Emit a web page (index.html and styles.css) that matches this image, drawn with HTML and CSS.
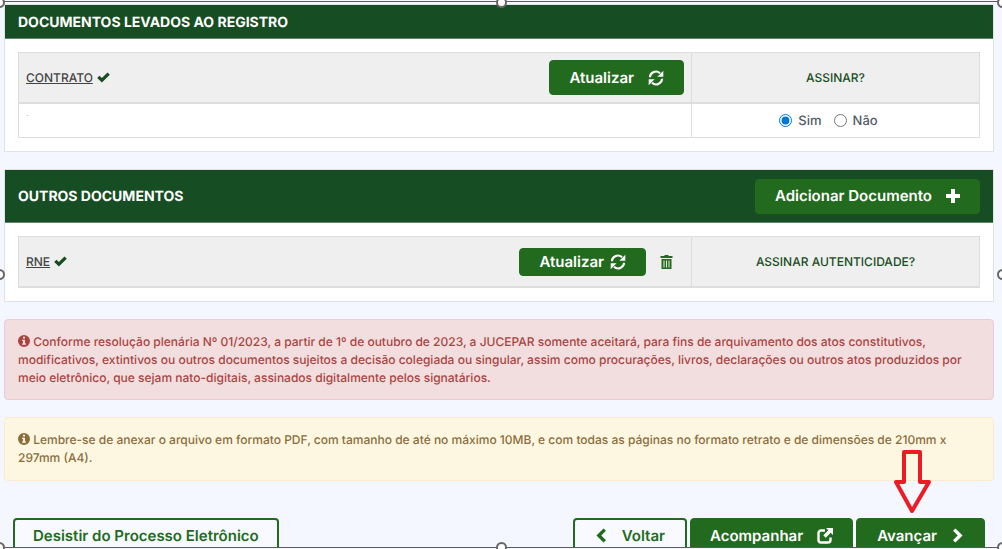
FILE: index.html
```html
<!DOCTYPE html>
<html lang="pt-BR">
<head>
<meta charset="utf-8">
<title>Documentos</title>
<link rel="stylesheet" href="styles.css">
</head>
<body>
<svg class="sprite" aria-hidden="true">
  <symbol id="check" viewBox="0 0 13 11"><path d="M.2 6.1 2.5 3.800l2.400 2.300L10.500.4l2.300 2.300-7.900 7.900z"/></symbol>
  <symbol id="refresh" viewBox="0 0 16 16"><path d="M1.900 7.200A6 6 0 0 1 12 3.200M14.100 8.800A6 6 0 0 1 4 12.800" fill="none" stroke="currentColor" stroke-width="2.100"/><path d="M15.300.8v5.900H9.400zM.7 15.200V9.300h5.900z"/></symbol>
  <symbol id="plus" viewBox="0 0 14 14"><path d="M5 0h4v5h5v4H9v5H5V9H0V5h5z"/></symbol>
  <symbol id="trash" viewBox="0 0 12 14"><path fill-rule="evenodd" d="M4 0h4v1h4v2H0V1h4zM1 4h10v10H1zm2 1.500v7h1v-7zm2.500 0v7h1v-7zm2.500 0v7h1v-7z"/></symbol>
  <symbol id="info" viewBox="0 0 12 12"><path fill-rule="evenodd" d="M6 0a6 6 0 1 1 0 12A6 6 0 0 1 6 0zM5 1.800v1.700h2V1.800zM4 4.700v1.200h1v2.600H4v1.300h4V8.500H7V4.700z"/></symbol>
  <symbol id="left" viewBox="0 0 10 14"><path d="M8.500 1.500 3 7l5.500 5.500" fill="none" stroke="currentColor" stroke-width="3.200"/></symbol>
  <symbol id="right" viewBox="0 0 10 14"><path d="M1.500 1.500 7 7l-5.500 5.500" fill="none" stroke="currentColor" stroke-width="3.200"/></symbol>
  <symbol id="share" viewBox="0 0 16 16"><path d="M8 2.500H4A2.500 2.500 0 0 0 1.500 5v7A2.500 2.500 0 0 0 4 14.500h7a2.500 2.500 0 0 0 2.500-2.500V9.500" fill="none" stroke="currentColor" stroke-width="2.400"/><path d="M9 0h7v7l-2.300-2.300-5 5-2.400-2.400 5-5z"/></symbol>
</svg>

<main class="page">
  <section class="card">
    <header class="card-header"><h2>DOCUMENTOS LEVADOS AO REGISTRO</h2></header>
    <div class="card-body">
      <table class="docs">
        <colgroup><col class="col-doc"><col></colgroup>
        <thead>
          <tr>
            <th scope="col"><div class="doc-row">
              <span class="doc-name"><a href="#">CONTRATO</a><svg class="icon-check"><use href="#check"/></svg></span>
              <button type="button" class="btn">Atualizar<svg class="icon"><use href="#refresh"/></svg></button>
            </div></th>
            <th scope="col" class="sign">ASSINAR?</th>
          </tr>
        </thead>
        <tbody>
          <tr>
            <td class="mark">.</td>
            <td><div class="choices">
              <label><input type="radio" name="assinar" checked>Sim</label>
              <label><input type="radio" name="assinar">Não</label>
            </div></td>
          </tr>
        </tbody>
      </table>
    </div>
  </section>

  <section class="card">
    <header class="card-header with-action">
      <h2>OUTROS DOCUMENTOS</h2>
      <button type="button" class="btn">Adicionar Documento<svg class="icon-plus"><use href="#plus"/></svg></button>
    </header>
    <div class="card-body">
      <table class="docs head-only">
        <colgroup><col class="col-doc"><col></colgroup>
        <thead>
          <tr>
            <th scope="col"><div class="doc-row">
              <span class="doc-name"><a href="#">RNE</a><svg class="icon-check"><use href="#check"/></svg></span>
              <span class="actions">
                <button type="button" class="btn btn-small">Atualizar<svg class="icon"><use href="#refresh"/></svg></button>
                <button type="button" class="btn-trash" aria-label="Excluir"><svg><use href="#trash"/></svg></button>
              </span>
            </div></th>
            <th scope="col" class="sign">ASSINAR AUTENTICIDADE?</th>
          </tr>
        </thead>
      </table>
    </div>
  </section>

  <p class="alert danger"><svg class="icon-info"><use href="#info"/></svg> Conforme resolução plenária Nº 01/2023, a partir de 1º de outubro de 2023, a JUCEPAR somente aceitará, para fins de arquivamento dos atos constitutivos, modificativos, extintivos ou outros documentos sujeitos a decisão colegiada ou singular, assim como procurações, livros, declarações ou outros atos produzidos por meio eletrônico, que sejam nato-digitais, assinados digitalmente pelos signatários.</p>
  <p class="alert warning"><svg class="icon-info"><use href="#info"/></svg> Lembre-se de anexar o arquivo em formato PDF, com tamanho de até no máximo 10MB, e com todas as páginas no formato retrato e de dimensões de 210mm x 297mm (A4).</p>

  <footer class="footer">
    <button type="button" class="btn outline">Desistir do Processo Eletrônico</button>
    <div class="nav">
      <button type="button" class="btn outline step"><svg class="icon-chevron"><use href="#left"/></svg>Voltar</button>
      <button type="button" class="btn">Acompanhar<svg class="icon"><use href="#share"/></svg></button>
      <div class="next">
        <button type="button" class="btn step">Avançar<svg class="icon-chevron"><use href="#right"/></svg></button>
        <svg class="arrow" viewBox="0 0 38 66"><path d="M11 3h16v30h9L19 62 3 33h8z" fill="none" stroke="#ed1c24" stroke-width="4" stroke-linejoin="round"/></svg>
      </div>
    </div>
  </footer>
</main>

<div class="frame" aria-hidden="true">
  <i class="top start"></i><i class="top mid"></i><i class="top end"></i>
  <i class="center start"></i><i class="center end"></i>
  <i class="bottom start"></i><i class="bottom mid"></i><i class="bottom end"></i>
</div>
</body>
</html>
```

FILE: styles.css
```css
* { box-sizing: border-box; }
body {
  margin: 0;
  height: 100vh;
  overflow: hidden;
  background: #f4f7ff;
  color: #545b66;
  font: 500 12px/18px Inter, "Liberation Sans", sans-serif;
  text-rendering: geometricPrecision;
}
h2, p { margin: 0; }
svg { fill: currentColor; flex: none; }
.sprite { display: none; }
.page {
  display: flex;
  flex-direction: column;
  gap: 17px;
  padding: 4px 8px 0 4px;
}

.card {
  background: #fff;
  border: 1px solid #dfe3e6;
}
.card-header {
  display: flex;
  align-items: center;
  justify-content: space-between;
  min-height: 34px;
  padding: 0 13px;
  background: #174d22;
  border-bottom: 1px solid #5f8568;
  color: #fff;
}
.card-header h2 { padding-top: 2px; font-size: 14px; line-height: 20px; font-weight: 700; }
.with-action { min-height: 53px; }
.card-body { padding: 13px; }

.docs {
  width: 100%;
  table-layout: fixed;
  border: 1px solid #ddd;
  border-collapse: separate;
  border-spacing: 0;
}
.col-doc { width: 70%; }
.docs th, .docs td { padding: 0 7px; text-align: left; font-weight: 500; }
.docs th { height: 51px; background: #efefef; border-bottom: 2px solid #ddd; }
.docs td { height: 33px; }
.docs th + th, .docs td + td { border-left: 1px solid #ddd; }
.docs .sign { text-align: center; color: #174d22; }
.head-only th { height: 50px; border-bottom-width: 1px; }
.docs .mark { color: #aaa; font-size: 8px; line-height: 18px; vertical-align: top; }
.doc-row { display: flex; align-items: center; justify-content: space-between; }
.doc-name { display: flex; align-items: center; gap: 4px; color: #174d22; }
.doc-name a { color: #444; text-decoration: underline; }
.icon-check { width: 13px; height: 11px; }
.actions { display: flex; align-items: center; gap: 14px; padding-right: 11px; }
.choices { display: flex; justify-content: center; gap: 12px; padding-right: 14px; font-size: 13px; }
.choices label { display: flex; align-items: center; gap: 6px; }
.choices input { width: 13px; height: 13px; margin: 0; accent-color: #0078d7; }

.btn {
  display: inline-flex;
  align-items: center;
  gap: 14px;
  height: 35px;
  padding: 0 19px;
  border: 1px solid #226b1e;
  border-radius: 4px;
  background: #226b1e;
  color: #fff;
  font: 600 15px/20px Inter, "Liberation Sans", sans-serif;
  text-rendering: inherit;
  white-space: nowrap;
}
.btn-small { height: 28px; gap: 6px; }
.btn-trash { display: flex; padding: 0; border: 0; background: none; color: #226b1e; }
.btn-trash svg { width: 13px; height: 14px; }
.icon { width: 16px; height: 16px; }
.icon-plus { width: 14px; height: 14px; }
.icon-chevron { width: 12px; height: 15px; }
.icon-info { width: 12px; height: 12px; vertical-align: -1px; }

.alert { padding: 13px; border: 1px solid; border-radius: 4px; }
.danger { padding-bottom: 12px; background: #f2dede; border-color: #ebccd1; color: #a94442; }
.warning { background: #fdf7e2; border-color: #faebcc; color: #8a6d3b; }

.footer {
  display: flex;
  justify-content: space-between;
  padding: 20px 9px 0;
}
.nav { display: flex; gap: 3px; }
.btn.outline { padding: 0 18px; background: #f8faff; border-width: 2px; color: #226b1e; }
.btn.step { padding: 0 20px; gap: 15px; }
.next { position: relative; }
.arrow {
  position: absolute;
  bottom: 100%;
  left: 50%;
  width: 38px;
  height: 66px;
  margin: 0 0 3px -28px;
}

.frame {
  position: fixed;
  inset: 1px 0;
  border: solid #5c5c5c;
  border-width: 1px 0;
  box-shadow: 0 1px #f4f7ff, 0 -1px #f4f7ff;
  pointer-events: none;
}
.frame i {
  position: absolute;
  width: 11px;
  height: 11px;
  margin: -5px;
  border: 2px solid #666;
  border-radius: 50%;
  background: #fff;
}
.top { top: 0; }
.frame .center { top: 50%; margin-top: -6px; }
.bottom { top: 100%; }
.frame .start { left: 0; margin-left: -6px; }
.mid { left: 50%; }
.end { left: 100%; }
```
